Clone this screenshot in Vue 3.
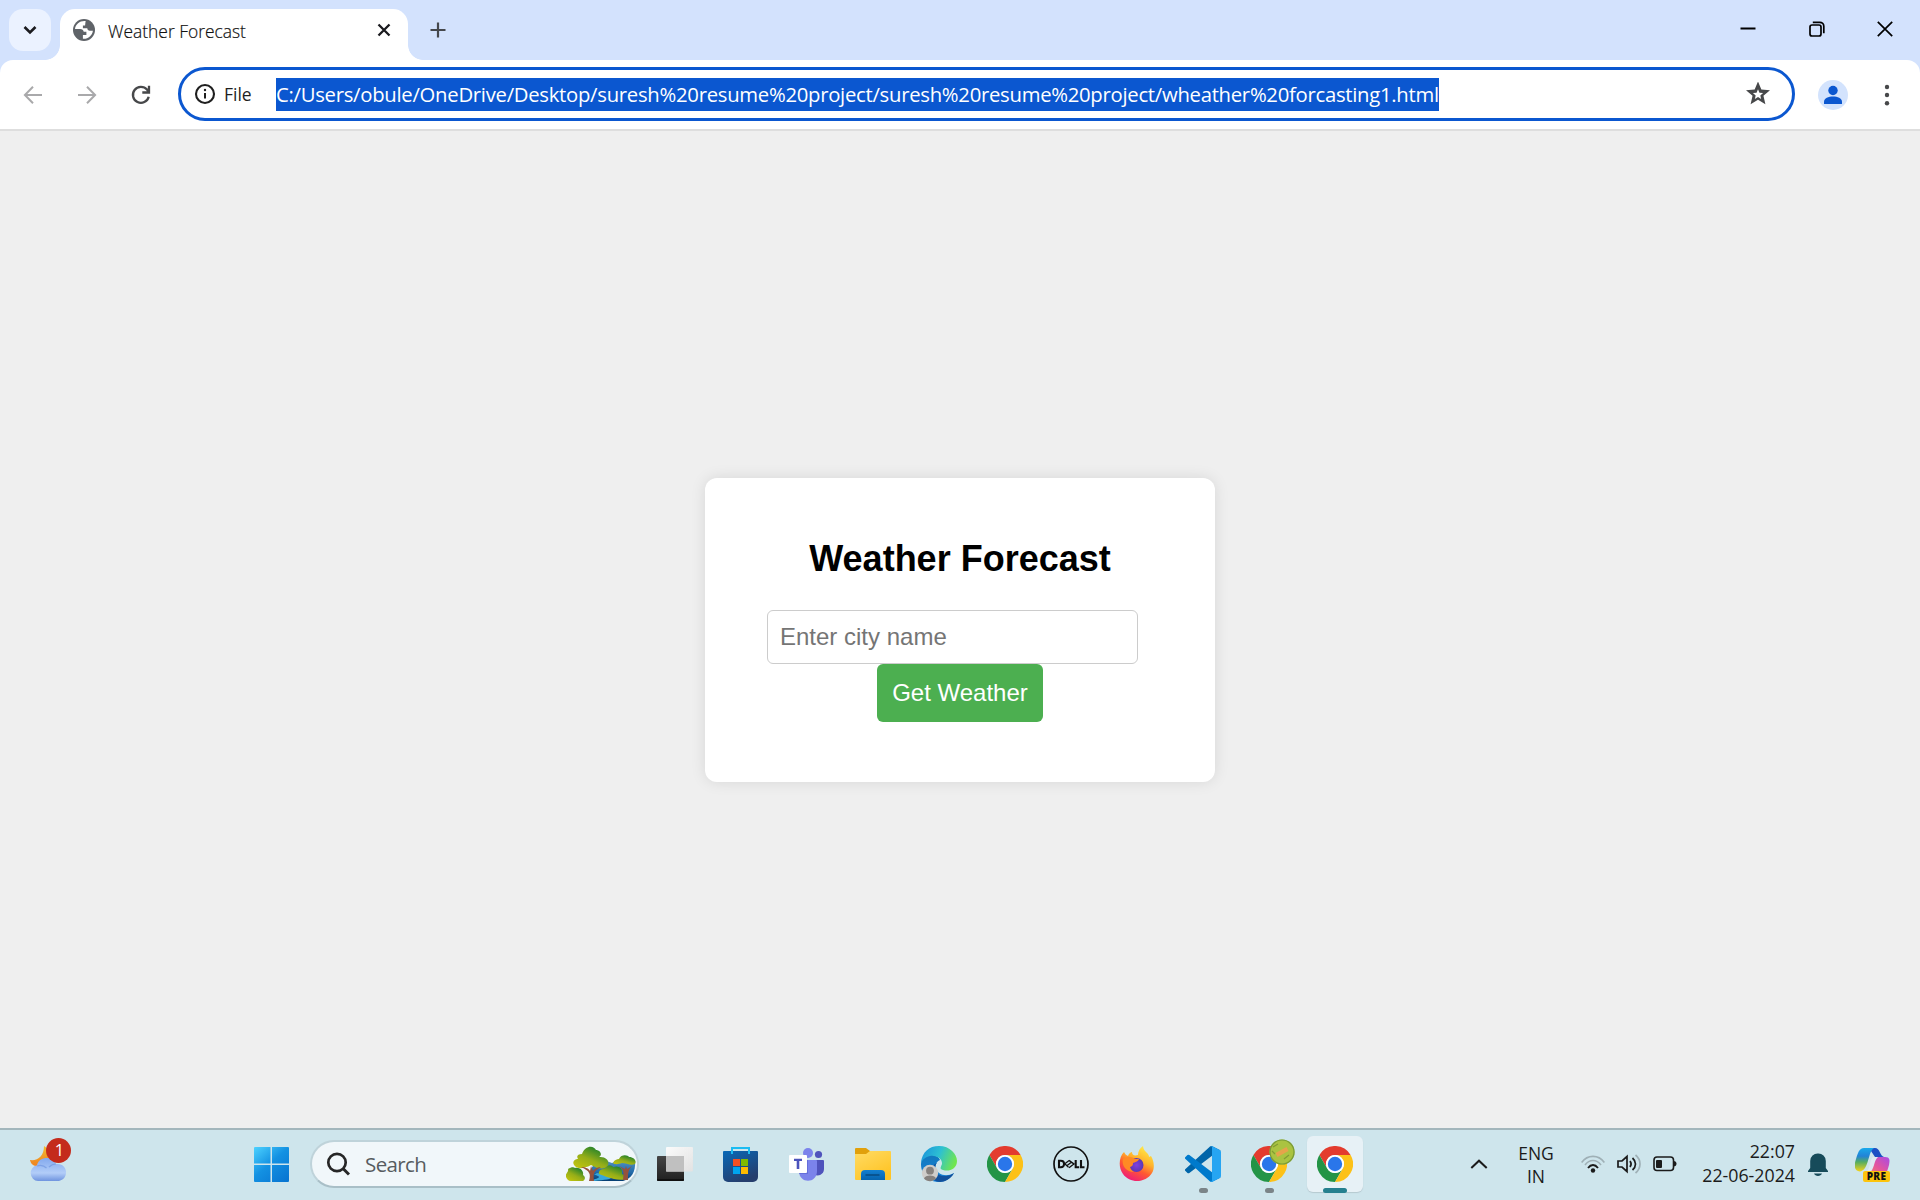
<script setup>
import { ref } from 'vue'

const tabTitle = 'Weather Forecast'
const url = 'C:/Users/obule/OneDrive/Desktop/suresh%20resume%20project/suresh%20resume%20project/wheather%20forcasting1.html'
const city = ref('')
</script>

<template>
  <div class="screen">
    <svg class="defs" width="0" height="0" aria-hidden="true">
      <defs>
        <symbol id="chrome" viewBox="0 0 48 48">
          <path fill="#e33b2e" d="M3.2 12A24 24 0 0 1 44.8 12H24A12 12 0 0 0 13.6 30Z" />
          <path fill="#239446" d="M3.2 12A24 24 0 0 0 24 48L34.4 30A12 12 0 0 1 13.6 30Z" />
          <path fill="#fcc118" d="M24 48A24 24 0 0 0 44.8 12H24A12 12 0 0 1 34.4 30Z" />
          <circle cx="24" cy="24" r="12" fill="#fff" />
          <circle cx="24" cy="24" r="9.6" fill="#2a76ea" />
        </symbol>
      </defs>
    </svg>

    <header class="tabs">
      <button class="tab-search" aria-label="Search tabs">
        <svg width="14" height="10" viewBox="0 0 14 10"><path d="M1.5 2 7 7.5 12.5 2" fill="none" stroke="#1b1b1f" stroke-width="2.6" /></svg>
      </button>
      <div class="tab">
        <svg class="globe" width="22" height="22" viewBox="0 0 22 22">
          <circle cx="11" cy="11" r="11" fill="#5f6368" />
          <path fill="#fff" d="M12.7 2.100C7.500 1.400 2.500 5 2 10h5.200c1.900 0 3.400 1.300 3.500 2.800h2.700v3.100h-3.500v3.900c5 .5 9.400-3.200 10-8.100h-3.100c-1.500 0-2.500-1-2.500-2.500H9.900V6.500h2.200c.3-1.300.2-3 .6-4.400Z" />
        </svg>
        <span class="tab-title">{{ tabTitle }}</span>
        <svg width="14" height="14" viewBox="0 0 14 14"><path d="M1.500 1.500l11 11m0-11-11 11" stroke="#1b1b1f" stroke-width="2.300" /></svg>
      </div>
      <svg class="plus" width="16" height="16" viewBox="0 0 16 16"><path d="M8 .5v15M.5 8h15" stroke="#45484d" stroke-width="2.200" /></svg>
      <div class="window-controls">
        <svg width="16" height="16" viewBox="0 0 16 16"><path d="M.5 7.500h15" stroke="#000" stroke-width="2" /></svg>
        <svg width="16" height="16" viewBox="0 0 16 16" fill="none" stroke="#000" stroke-width="1.700"><rect x="1" y="4" width="11" height="11" rx="2" /><path d="M3.800 1.300h7a4 4 0 0 1 4 4v7" /></svg>
        <svg width="16" height="16" viewBox="0 0 16 16"><path d="M.8.800l14.400 14.400m0-14.400L.8 15.200" stroke="#000" stroke-width="1.700" /></svg>
      </div>
    </header>

    <nav class="toolbar-wrap">
      <div class="toolbar">
        <div class="nav-icons">
          <svg width="20" height="20" viewBox="0 0 20 20" fill="none" stroke="#a9a9ab" stroke-width="2"><path d="M19 10H2.500M10 1.800 1.900 10l8.100 8.200" /></svg>
          <svg width="20" height="20" viewBox="0 0 20 20" fill="none" stroke="#a9a9ab" stroke-width="2"><path d="M1 10h16.500M10 1.800l8.100 8.200-8.100 8.200" /></svg>
          <svg width="20" height="20" viewBox="0 0 20 20" fill="none" stroke="#47484a" stroke-width="2.300"><path d="M17.700 11.700A8 8 0 1 1 16 4.600L17.500 6.500M18 .8v6.700h-6.700" /></svg>
        </div>
        <div class="omnibox">
          <svg width="22" height="22" viewBox="0 0 22 22"><circle cx="11" cy="11" r="9" fill="none" stroke="#1f1f1f" stroke-width="2.100" /><path d="M11 10v5.500" stroke="#1f1f1f" stroke-width="2" /><circle cx="11" cy="7" r="1.200" fill="#1f1f1f" /></svg>
          <span class="scheme">File</span>
          <span class="url">{{ url }}</span>
          <svg class="star" width="24" height="24" viewBox="0 0 24 24"><path fill="#47484a" d="m8.850 16.950 3.150-1.900 3.150 1.925-.825-3.600 2.775-2.400-3.650-.325-1.450-3.400-1.450 3.375-3.650.325 2.775 2.425ZM4.600 22.300l1.950-8.450L0 8.200l8.650-.75L12 -.5l3.350 7.950 8.650.75-6.550 5.650 1.950 8.450L12 17.800Z" /></svg>
        </div>
        <svg class="profile" width="30" height="30" viewBox="0 0 30 30"><circle cx="15" cy="15" r="15" fill="#d3e3fd" /><circle cx="15" cy="10.500" r="4.700" fill="#0b57d0" /><path fill="#0b57d0" d="M6 24v-2.300c0-7 18-7 18 0V24Z" /></svg>
        <svg class="menu" width="6" height="24" viewBox="0 0 6 24" fill="#47484a"><circle cx="3" cy="4" r="2.200" /><circle cx="3" cy="12" r="2.200" /><circle cx="3" cy="20.300" r="2.200" /></svg>
      </div>
    </nav>

    <main class="page">
      <section class="card">
        <h2>Weather Forecast</h2>
        <input v-model="city" type="text" placeholder="Enter city name" />
        <button class="get">Get Weather</button>
      </section>
    </main>

    <footer class="taskbar">
      <div class="weather">
        <svg width="42" height="46" viewBox="0 0 42 46">
          <defs>
            <linearGradient id="moon" x2="0" y2="1"><stop stop-color="#f3bd32" /><stop offset="1" stop-color="#ee821f" /></linearGradient>
            <linearGradient id="cloud" x2="0" y2="1"><stop stop-color="#83a9ee" /><stop offset=".65" stop-color="#b2cdf8" /><stop offset="1" stop-color="#6f94df" /></linearGradient>
          </defs>
          <path fill="url(#moon)" d="M14 8c8 4 7 20-6 20C3 28 1 26 0 22c8 1 14-4 14-14Z" />
          <path fill="url(#cloud)" d="M8 43a8 8 0 0 1-1-15.800c2-9.200 16-9.500 19-1.200 13-1.500 13.500 17 1 17Z" />
          <path fill="none" stroke="#668ddb" stroke-width="1.200" opacity=".55" d="M7 28c4-1.500 7-.5 9.500 2M19 29c2-2 4-3 7-3" />
        </svg>
        <span class="badge">1</span>
      </div>

      <svg class="start" width="35" height="35" viewBox="0 0 35 35">
        <defs><linearGradient id="win" gradientUnits="userSpaceOnUse" x1="0" y1="0" x2="30" y2="35"><stop stop-color="#4dd2ff" /><stop offset=".5" stop-color="#1391e2" /><stop offset="1" stop-color="#0876d2" /></linearGradient></defs>
        <path fill="url(#win)" d="M1 0h15.500v16.500H0V1a1 1 0 0 1 1-1ZM18 0h16a1 1 0 0 1 1 1v15.500H18ZM0 18h16.500v17H1a1 1 0 0 1-1-1ZM18 18h17v16a1 1 0 0 1-1 1H18Z" />
      </svg>

      <div class="search">
        <svg class="glass" width="24" height="24" viewBox="0 0 24 24" fill="none" stroke="#262626" stroke-width="2.700"><circle cx="11" cy="10.500" r="8.700" /><path d="m17 16.500 6 6" stroke-width="3" /></svg>
        <span>Search</span>
        <svg class="trees" width="70" height="36" viewBox="0 0 70 36">
          <defs>
            <linearGradient id="leaf" x1="0" y1="1" x2=".7" y2="0"><stop stop-color="#c8c80d" /><stop offset=".5" stop-color="#96ae18" /><stop offset="1" stop-color="#187e2c" /></linearGradient>
            <linearGradient id="lake" x2="0" y2="1"><stop stop-color="#5795c4" /><stop offset=".6" stop-color="#216aa9" /><stop offset="1" stop-color="#063e71" /></linearGradient>
          </defs>
          <path fill="url(#lake)" d="M26 35V21c6-6 12-8 20-4 8-4 16-5 23-2 1 11-4 18-12 20Z" />
          <path fill="#36a7da" d="M31 27c7 1 15 2 15 4s-7 3-18 4h-4c5-2 9-3 9-4s-3-2-5-2Z" />
          <path fill="url(#leaf)" d="M33 28c-1-4 3-5 5-5 3-5 8-4 9-2 6-2 10 1 9 7l4 2c0 5-7 4-12 3-5-1-9-3-15-5Z" />
          <path fill="url(#leaf)" d="M0 31c-1-4 3-5 2-8 3-2 6-2 7-1 5-1 9 3 8 7 3 2 2 5 0 6H5c-3 0-4-2-5-4Z" />
          <path fill="url(#leaf)" d="M9 20c-4-4 0-7 3-7-2-3 0-5 4-5 3-9 12-9 14-4 4 0 7 5 3 7 9-1 12 7 7 10-4 3-10 1-15-2-7 4-14 4-16 1Z" />
          <path fill="url(#leaf)" d="M47 17c1-3 4-4 6-4 2-5 9-4 10-2 5 0 8 4 6 7-4 2-9-1-13-1-3 1-7 2-9 0Z" />
          <path fill="#96523c" d="M23 35c2-7 1-10-8-14 5 0 8 2 9 4l1-5 2 5c2-3 5-4 8-4-7 4-8 6-7 14ZM57 34c1-8 1-10-4-14l6 3 1-3 1 3 5-3c-4 4-4 7-4 14Z" />
        </svg>
      </div>

      <div class="apps">
        <div class="slot">
          <svg width="36" height="36" viewBox="0 0 36 36">
            <defs>
              <linearGradient id="dark" x2="0" y2="1"><stop stop-color="#454545" /><stop offset="1" stop-color="#202020" /></linearGradient>
              <linearGradient id="light" x2="1" y2="1"><stop stop-color="#fbfbfb" /><stop offset="1" stop-color="#e2e2e2" /></linearGradient>
            </defs>
            <rect y="10" width="27" height="25" rx="1" fill="url(#dark)" /><path d="M0 34h27" stroke="#000" />
            <rect x="9" y="1" width="27" height="24.500" rx="1" fill="url(#light)" /><path fill="#c0c0c0" d="M9 10h18v15.500H9Z" />
          </svg>
        </div>
        <div class="slot">
          <svg width="36" height="36" viewBox="0 0 36 36">
            <defs><linearGradient id="store" x2=".5" y2="1"><stop stop-color="#0868b7" /><stop offset="1" stop-color="#253e6d" /></linearGradient></defs>
            <path fill="url(#store)" d="M0 6a1 1 0 0 1 1-1h33a1 1 0 0 1 1 1v25a5 5 0 0 1-5 5H5a5 5 0 0 1-5-5Z" />
            <path d="M9 8V2h17v6" fill="none" stroke="#1bbcf2" stroke-width="2" />
            <path fill="#f25022" d="M10 13h7v7h-7Z" /><path fill="#7fba00" d="M18 13h7v7h-7Z" /><path fill="#00a4ef" d="M10 21h7v7h-7Z" /><path fill="#ffb900" d="M18 21h7v7h-7Z" />
          </svg>
        </div>
        <div class="slot">
          <svg width="36" height="36" viewBox="0 0 36 36">
            <circle cx="29.500" cy="8.500" r="3.600" fill="#4f53bc" /><path fill="#4f53bc" d="M25 14h9a1 1 0 0 1 1 1v8c0 5-5 8-10 5.500Z" />
            <circle cx="19" cy="7" r="5" fill="#7b83eb" /><path fill="#7b83eb" d="M10 14h17a1 1 0 0 1 1 1v10c0 13-18 13-18 0Z" />
            <path fill="#5059c9" opacity=".5" d="M10 14h9v14h-9Z" />
            <rect y="9" width="18" height="18" rx="1" fill="#fff" /><path fill="#4b53bc" d="M5 12.800h8v2.300h-2.700v8H7.700v-8H5Z" />
          </svg>
        </div>
        <div class="slot">
          <svg width="36" height="36" viewBox="0 0 36 36">
            <defs><linearGradient id="fold" x2=".6" y2="1"><stop stop-color="#ffdb64" /><stop offset="1" stop-color="#ffc425" /></linearGradient><linearGradient id="tray" x2="0" y2="1"><stop stop-color="#137fd0" /><stop offset="1" stop-color="#0663ae" /></linearGradient></defs>
            <path fill="#e1a00b" d="M0 3a1 1 0 0 1 1-1h10l4 3v8H0Z" />
            <path fill="url(#fold)" d="M0 8h11l4-3h20a1 1 0 0 1 1 1v27a1 1 0 0 1-1 1H1a1 1 0 0 1-1-1Z" />
            <path fill="url(#tray)" d="M6 34v-6a4 4 0 0 1 4-4h16a4 4 0 0 1 4 4v6Z" /><path d="M10.500 29h14" stroke="#084d85" stroke-width="1.600" />
          </svg>
        </div>
        <div class="slot">
          <svg width="36" height="36" viewBox="0 0 36 36">
            <defs>
              <linearGradient id="edgeTop" y1=".2" x2="1" y2=".5"><stop stop-color="#1a94dc" /><stop offset=".5" stop-color="#2dc0d2" /><stop offset="1" stop-color="#70e64f" /></linearGradient>
              <linearGradient id="edgeLeft" x2="0" y2="1"><stop stop-color="#1279bd" /><stop offset="1" stop-color="#1481dc" /></linearGradient>
            </defs>
            <path fill="url(#edgeLeft)" d="M0 18C0 8 16 6 19 14c-5 2-6 9-1 13 4 3 10 3 15 0-6 10-18 11-25 6-6-4-8-9-8-15Z" />
            <path fill="#11519c" d="M16 17c-4 4-3 10 2 12 5 2 11 1 15-2-5 9-15 11-20 7-7-6-4-14 3-17Z" />
            <path fill="url(#edgeTop)" d="M0 17C1 6 8 0 18 0c11 0 18 8 18 15 0 8-8 11-14 9-4-1-2-3-1-6 1-8-15-13-21-1Z" />
            <circle cx="9" cy="27" r="8.200" fill="#cfcdca" /><circle cx="9" cy="24.700" r="3.900" fill="#85817e" /><path fill="#85817e" d="M3 32.500c1-4 11-4 12 0-3 3.600-9 3.600-12 0Z" />
          </svg>
        </div>
        <div class="slot"><svg width="36" height="36"><use href="#chrome" /></svg></div>
        <div class="slot">
          <svg width="36" height="36" viewBox="0 0 36 36">
            <circle cx="18" cy="18" r="17" fill="none" stroke="#111" stroke-width="1.700" />
            <g fill="none" stroke="#111" stroke-width="2.100"><path d="M6 14.700v6.600h1.800c4.400 0 4.400-6.600 0-6.600Z" /><path d="M22.700 14v7.200h3.500M28 14v7.200h3.500" /><path d="m11.500 18 4.600-3.600M13.500 20l5.200-4.100M16 21.700l5.500-4.300M11.500 17.500l4 3.700M16 14.400l5.500 4" stroke-width="1.300" /></g>
          </svg>
        </div>
        <div class="slot">
          <svg width="36" height="36" viewBox="0 0 36 36">
            <defs>
              <linearGradient id="fire" x1=".8" y1="0" x2=".3" y2="1"><stop stop-color="#fff04b" /><stop offset=".4" stop-color="#ffb32b" /><stop offset=".65" stop-color="#ff5a31" /><stop offset="1" stop-color="#ed187d" /></linearGradient>
              <radialGradient id="orb"><stop stop-color="#8140df" /><stop offset="1" stop-color="#5b38b5" /></radialGradient>
            </defs>
            <path fill="url(#fire)" d="M5 6c1 2 2 3 4 4 1-3 3-4 4-4 0 3 2 4 6 3 0-4 2-7 5-9 0 3 2 5 4 7 1 1 2 2 2 4l2-1c3 5 4 12 1 17-6 10-22 11-29 1C-1 21 0 11 5 6Z" />
            <circle cx="17.500" cy="19" r="7" fill="url(#orb)" />
            <path fill="#ff8a24" d="M4 13c5-3 9-2 12 0h4c-1 3-4 3-6 4 0 3-1 3-3 4 1 3 2 4 4 5-7 0-13-6-11-13Z" />
          </svg>
        </div>
        <div class="slot">
          <svg width="36" height="36" viewBox="0 0 100 100">
            <path fill="#0065a9" d="M96.461 10.796 75.857.876a6.230 6.230 0 0 0-7.107 1.207l-67.451 61.500a4.167 4.167 0 0 0 .004 6.162l5.510 5.009a4.167 4.167 0 0 0 5.320.236l81.228-61.620c2.725-2.067 6.639-.124 6.639 3.297v-.240a6.250 6.250 0 0 0-3.539-5.630Z" />
            <path fill="#007acc" d="m96.461 89.204-20.604 9.920a6.229 6.229 0 0 1-7.107-1.207l-67.451-61.500a4.167 4.167 0 0 1 .004-6.162l5.510-5.009a4.167 4.167 0 0 1 5.320-.236l81.228 61.620c2.725 2.067 6.639.124 6.639-3.297v.240a6.250 6.250 0 0 1-3.539 5.630Z" />
            <path fill="#26a5f2" d="M75.858 99.126a6.232 6.232 0 0 1-7.108-1.210c2.306 2.307 6.250.674 6.250-2.588V4.672c0-3.262-3.944-4.895-6.250-2.589a6.232 6.232 0 0 1 7.108-1.210l20.600 9.908A6.250 6.250 0 0 1 100 16.413v67.174a6.250 6.250 0 0 1-3.541 5.633l-20.601 9.906Z" />
          </svg>
          <i class="dot"></i>
        </div>
        <div class="slot">
          <svg width="36" height="36"><use href="#chrome" /></svg>
          <svg class="avatar" width="26" height="26" viewBox="0 0 26 26"><circle cx="13" cy="13" r="12.600" fill="#aac341" /><circle cx="13" cy="13" r="12" fill="none" stroke="#799b38" stroke-width="1.200" /><path d="m7 15 11-6M8 17l11-6" stroke="#e7a34b" stroke-width="2" /><path d="M4 8l5-3M15 20l5-4M3 12l3 3" stroke="#829c34" stroke-width="1.200" /></svg>
          <i class="dot"></i>
        </div>
        <div class="slot active"><svg width="36" height="36"><use href="#chrome" /></svg><i class="dot"></i></div>
      </div>

      <div class="tray">
        <svg class="chev" width="18" height="10" viewBox="0 0 18 10"><path d="m1.300 9 7.700-7.300L16.700 9" fill="none" stroke="#1b1b1b" stroke-width="2" /></svg>
        <div class="lang"><span>ENG</span><span>IN</span></div>
        <svg class="wifi" width="24" height="18" viewBox="0 0 24 18" fill="none" stroke-width="1.600"><g stroke="#9fb0b6"><path d="M.6 7.500c6-8.200 16.800-8.200 22.800 0" /><path d="M4 10c4.500-6 11.500-6 16 0" /></g><path stroke="#1b1b1b" stroke-width="1.800" d="M7 13c3-4 7-4 10 0" /><circle cx="12" cy="15.500" r="2.200" fill="#1b1b1b" /></svg>
        <svg class="speaker" width="24" height="20" viewBox="0 0 24 20" fill="none" stroke="#1b1b1b" stroke-width="1.700"><path d="M1 7v6h4l5 4.500v-15L5 7ZM13 7c1.500 2 1.500 4 0 6M15.500 4c4 3.500 4 8.500 0 12" /><path stroke="#9fb0b6" d="M18.500 1c6 5 6 13 0 18" /></svg>
        <svg class="battery" width="24" height="16" viewBox="0 0 24 16"><rect x="1" y="1" width="19.500" height="13.500" rx="3" fill="none" stroke="#1b1b1b" stroke-width="1.600" /><rect x="3" y="4" width="6" height="8" rx="1" fill="#1b1b1b" /><path fill="#1b1b1b" d="M20.500 5c4 0 4 5.500 0 5.500Z" /></svg>
        <div class="clock"><span>22:07</span><span>22-06-2024</span></div>
        <svg class="bell" width="20" height="24" viewBox="0 0 20 24" fill="#174b5a"><path d="M10 .5a7.500 7.500 0 0 1 7.800 7.500v7L20 18v1H0v-1l2.200-3V8A7.500 7.500 0 0 1 10 .5ZM6 20.500h8c-1 3.200-7 3.200-8 0Z" /></svg>
        <div class="copilot">
          <svg width="35" height="28" viewBox="0 0 35 28">
            <defs>
              <linearGradient id="cpA" x2="0" y2="1"><stop stop-color="#18a9eb" /><stop offset=".35" stop-color="#2383d6" /><stop offset=".6" stop-color="#55ad62" /><stop offset="1" stop-color="#f4d31b" /></linearGradient>
              <linearGradient id="cpB" x1="1" y1="0" x2="0" y2="1"><stop stop-color="#a84be5" /><stop offset=".5" stop-color="#e3549f" /><stop offset="1" stop-color="#f58d60" /></linearGradient>
            </defs>
            <path fill="#1d4fc4" d="M14 0h6c5 0 5 8 9 9h-9Z" />
            <path fill="url(#cpA)" d="M9 0h10c-5 3-5 14-9 20-2 3-5 4-7 3-4-2-4-6-2-12C3 5 4 0 9 0Z" />
            <path fill="url(#cpB)" d="M23 9h7c5 0 5 3 4 8-2 7-3 11-9 11H11c6-3 6-19 12-19Z" />
            <path fill="#dfeaf3" d="M18 9h5c-4 3-4 13-8 15h-4c5-3 3-12 7-15Z" />
          </svg>
          <span class="pre">PRE</span>
        </div>
      </div>
    </footer>
  </div>
</template>

<style>
body { margin: 0; overflow: hidden; }
</style>

<style scoped>
* { box-sizing: border-box; }
svg { display: block; flex: none; }
button { border: 0; padding: 0; font: inherit; }
.defs { position: absolute; }
.screen { width: 1920px; height: 1200px; display: flex; flex-direction: column; background: #efefef; font-family: "Open Sans", "Noto Sans", sans-serif; white-space: nowrap; }

.tabs { height: 60px; flex: none; display: flex; background: #d3e2fd; padding: 9px 27px 0 9px; align-items: flex-start; }
.tab-search { width: 42px; height: 42px; border-radius: 14px; background: #ebf2ff; display: flex; align-items: center; justify-content: center; }
.tab { position: relative; width: 348px; height: 51px; margin-left: 9px; border-radius: 15px 15px 0 0; background: #fff; display: flex; align-items: center; padding: 0 17px 9px 13px; }
.tab::before, .tab::after { content: ""; position: absolute; bottom: 0; width: 15px; height: 15px; }
.tab::before { left: -15px; background: radial-gradient(circle at 0 0, transparent 14.500px, #fff 15.200px); }
.tab::after { right: -15px; background: radial-gradient(circle at 100% 0, transparent 14.500px, #fff 15.200px); }
.tab-title { margin-left: 13px; flex: 1; font-size: 17.400px; font-weight: 300; color: #111; -webkit-text-stroke: .2px #111; line-height: 24px; padding-top: 2px; }
.plus { margin: 13px 0 0 22px; }
.window-controls { display: flex; gap: 52.500px; margin: 12px 0 0 auto; }

.toolbar-wrap { height: 71px; flex: none; background: #d3e2fd; }
.toolbar { height: 71px; background: #fff; border-radius: 13px 13px 0 0; border-bottom: 2px solid #dedede; display: flex; align-items: center; padding: 0 30px 1px 23px; }
.nav-icons { display: flex; gap: 34px; width: 155px; padding-top: 1px; }
.omnibox { width: 1617px; height: 54px; border: 3px solid #0b57d0; border-radius: 27px; display: flex; align-items: center; padding: 0 22px 0 13px; }
.scheme { width: 53px; margin-left: 8px; font-size: 17.500px; color: #1f1f1f; }
.url { height: 33px; line-height: 32px; margin-left: -1px; background: #0b57d0; color: #fff; font-size: 20.300px; letter-spacing: -.277px; }
.star { margin-left: auto; }
.profile { margin: 1px 0 0 23px; }
.menu { margin: 1px 0 0 auto; }

.page { flex: 1; display: flex; justify-content: center; align-items: flex-start; padding-top: 347px; font-family: "Liberation Sans", Arial, sans-serif; }
.card { width: 510px; height: 304px; background: #fff; border-radius: 12px; box-shadow: 0 0 15px rgba(0, 0, 0, .1); padding: 60px 62px; display: flex; flex-direction: column; align-items: center; }
h2 { margin: 0 0 31px; font-size: 36px; line-height: 41px; font-weight: 700; color: #000; }
input { width: 371px; height: 54px; align-self: flex-start; border: 1px solid #ccc; border-radius: 6px; padding: 0 12px; font: 24px "Liberation Sans", Arial, sans-serif; outline: 0; background: #fff; }
input::placeholder { color: #757575; }
.get { width: 166px; height: 58px; border-radius: 6px; background: #4caf50; color: #fff; font: 24px "Liberation Sans", Arial, sans-serif; }

.taskbar { height: 72px; flex: none; display: flex; align-items: flex-start; border-top: 2px solid #a3b6bc; background: #cee5ec; }
.weather { position: relative; width: 254px; padding: 8px 0 0 30px; }
.badge { position: absolute; left: 46px; top: 8px; width: 25px; height: 25px; border-radius: 50%; background: #c42b1c; color: #fff; font-size: 16.500px; line-height: 24px; text-align: center; padding-left: 2px; }
.start { margin-top: 17px; }
.search { width: 329px; height: 48px; margin: 10px 0 0 21px; border: 2px solid #bfd3da; border-bottom-color: #a9bfc7; border-radius: 24px; background: #f1f7fa; display: flex; align-items: center; padding-left: 14px; font-size: 20.500px; letter-spacing: -.6px; color: #575c5f; }
.search span { margin-left: 15px; }
.trees { margin: 0 1px 0 auto; }
.apps { display: flex; margin-left: 3px; }
.slot { position: relative; width: 66px; height: 70px; display: flex; align-items: flex-start; justify-content: center; padding-top: 16px; }
.dot { position: absolute; left: 28.500px; top: 58px; width: 9px; height: 5px; border-radius: 3px; background: #7b8488; }
.active { width: 56px; height: 56px; margin: 6px 5px 0; padding-top: 10px; background: #e7f1f6; border-radius: 6px; box-shadow: 0 1px 1px #b6c9d0; }
.active .dot { left: 16px; top: 52px; width: 24px; background: #25808f; }
.avatar { position: absolute; left: 33px; top: 9px; }
.tray { flex: 1; height: 70px; display: flex; align-items: flex-start; color: #1b1b1b; font-size: 17.500px; line-height: 23px; }
.chev { margin: 29px 0 0 102px; }
.lang { width: 50px; margin: 12px 0 0 23px; display: flex; flex-direction: column; align-items: center; }
.wifi { margin: 25px 0 0 20px; }
.speaker { margin: 24px 0 0 12px; }
.battery { margin: 26px 0 0 12px; }
.clock { width: 118px; margin: 9px 0 0; display: flex; flex-direction: column; align-items: flex-end; line-height: 24px; font-size: 17.800px; }
.bell { margin: 23px 0 0 13px; }
.copilot { position: relative; margin: 18px 0 0 27px; }
.pre { position: absolute; left: 8px; top: 23px; width: 27px; height: 11px; border-radius: 2px; background: #fcc40d; color: #111; font-size: 10px; line-height: 11px; font-weight: 800; text-align: center; letter-spacing: .3px; }
</style>
